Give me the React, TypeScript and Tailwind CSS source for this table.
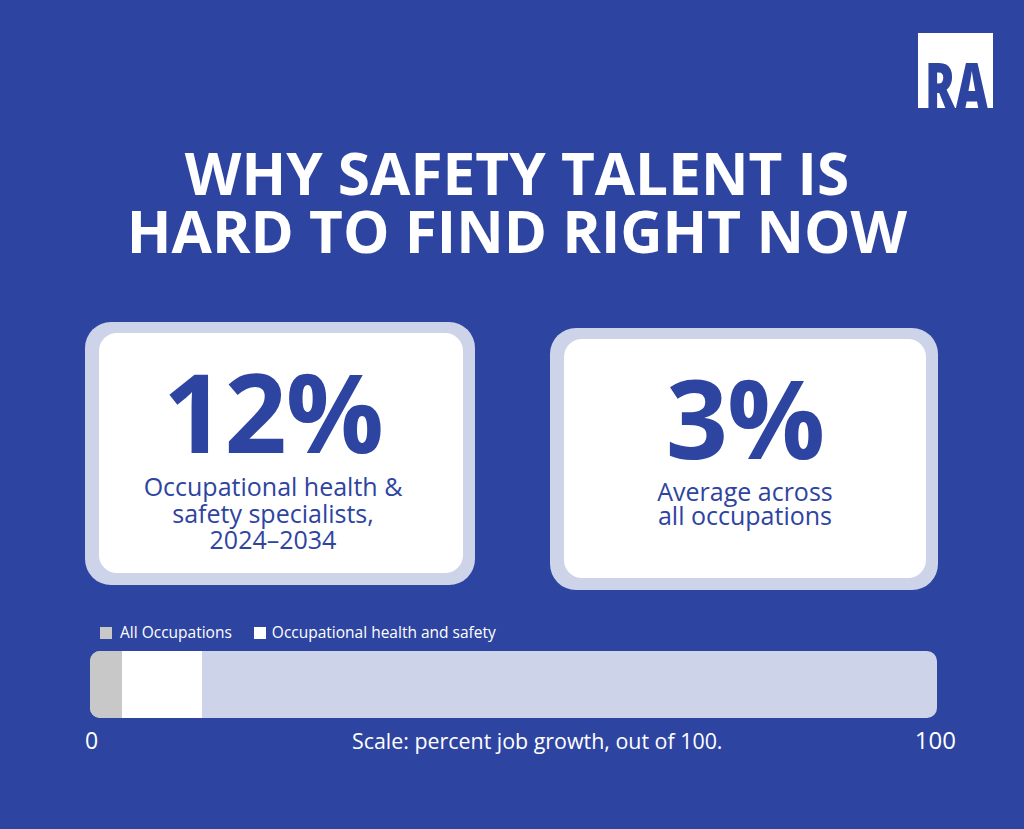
import React from "react";

const BLUE = "#2e44a1";

function Logo() {
  return (
    <svg width="75" height="75" viewBox="0 0 75 75" className="block">
      <rect x="0" y="0" width="75" height="75" fill="#ffffff" />
      <text
        x="7"
        y="77"
        fill={BLUE}
        fontFamily="'Open Sans', sans-serif"
        fontWeight={800}
        fontSize="65"
        textLength="63"
        lengthAdjust="spacingAndGlyphs"
      >
        RA
      </text>
    </svg>
  );
}

function StatCard({
  value,
  lines,
  className,
  contentClass,
  leading,
}: {
  value: string;
  lines: string[];
  className: string;
  contentClass: string;
  leading: string;
}) {
  return (
    <div className={`bg-[#cdd3e9] rounded-[26px] pt-[11px] pb-[12px] pl-[14px] pr-[12px] ${className}`}>
      <div className="w-full h-full bg-white rounded-[18px] flex flex-col items-center pt-[23px]">
        <div className={`flex flex-col items-center ${contentClass}`}>
          <div className="text-[109px] leading-[110px] font-bold tracking-[-1px] text-[#2e44a1]">{value}</div>
          <div className={`mt-[7px] text-[25px] ${leading} text-center text-[#2e44a1]`}>
            {lines.map((l, i) => (
              <div key={i}>{l}</div>
            ))}
          </div>
        </div>
      </div>
    </div>
  );
}

export default function App() {
  return (
    <div className="w-[1024px] h-[829px] bg-[#2e44a1] flex flex-col overflow-hidden font-['Open_Sans',sans-serif]">
      <div className="flex justify-end pt-[33px] pr-[31px]">
        <Logo />
      </div>
      <h1 className="mt-[35px] pl-[10px] text-center text-white font-bold text-[58.5px] leading-[58px]">
        WHY SAFETY TALENT IS
        <br />
        HARD TO FIND RIGHT NOW
      </h1>
      <div className="flex items-start mt-[63px] pl-[85px] gap-[75px]">
        <StatCard
          value="12%"
          lines={["Occupational health &", "safety specialists,", "2024–2034"]}
          className="w-[390px] h-[263px]"
          contentClass="pr-[16px]"
          leading="leading-[26.5px]"
        />
        <StatCard
          value="3%"
          lines={["Average across", "all occupations"]}
          className="w-[388px] h-[262px] mt-[6px]"
          contentClass=""
          leading="leading-[24px]"
        />
      </div>
      <div className="flex items-center mt-[33px] pl-[100px] h-[20px] text-[15.5px] text-white">
        <span className="w-[12px] h-[12px] bg-[#c8c8c8]" />
        <span className="ml-[8px]">All Occupations</span>
        <span className="ml-[22px] w-[12px] h-[12px] bg-white" />
        <span className="ml-[6px]">Occupational health and safety</span>
      </div>
      <div className="mt-[8px] ml-[90px] w-[847px] h-[67px] rounded-[10px] overflow-hidden flex bg-[#cdd3e9]">
        <div className="w-[32px] bg-[#c8c8c8]" />
        <div className="w-[80px] bg-white" />
      </div>
      <div className="mt-[10px] flex items-baseline text-white pl-[85px]">
        <span className="text-[23px] leading-[24px] w-[20px]">0</span>
        <span className="text-[21.4px] leading-[24px] ml-[247px]">Scale: percent job growth, out of 100.</span>
        <span className="text-[24px] leading-[24px] ml-auto mr-[68px]">100</span>
      </div>
    </div>
  );
}
